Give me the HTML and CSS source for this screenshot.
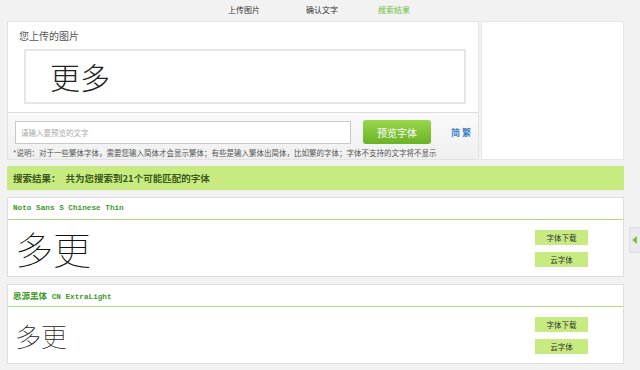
FILE: index.html
```html
<!DOCTYPE html>
<html lang="zh-CN">
<head>
<meta charset="UTF-8">
<title>搜索结果</title>
<link rel="stylesheet" href="styles.css">
</head>
<body>
<div class="steps">
    <span class="step">上传图片</span>
    <span class="step">确认文字</span>
    <span class="step active">搜索结果</span>
</div>
<div class="wrap">
    <div class="upload-row">
        <div class="upload">
            <div class="upload-top">
                <div class="upload-title">您上传的图片</div>
                <div class="pic">更多</div>
            </div>
            <div class="upload-bottom">
                <div class="input-row">
                    <input type="text" class="text-input" placeholder="请输入要预览的文字">
                    <button class="preview-btn">预览字体</button>
                    <span class="switch">简 繁</span>
                </div>
                <div class="note">*说明：对于一些繁体字体，需要您输入简体才会显示繁体；有些是输入繁体出简体，比如繁的字体；字体不支持的文字将不显示</div>
            </div>
        </div>
        <div class="side"></div>
    </div>

    <div class="result-bar">搜索结果：<span class="count">共为您搜索到21个可能匹配的字体</span></div>

    <div class="card">
        <div class="card-head">Noto Sans S Chinese Thin</div>
        <div class="card-body">
            <div class="sample big">多更</div>
            <div class="actions">
                <a class="act">字体下载</a>
                <a class="act">云字体</a>
            </div>
        </div>
    </div>

    <div class="card">
        <div class="card-head"><span class="cn">思源黑体</span> CN ExtraLight</div>
        <div class="card-body">
            <div class="sample small">多更</div>
            <div class="actions">
                <a class="act">字体下载</a>
                <a class="act">云字体</a>
            </div>
        </div>
    </div>
</div>
<div class="side-tab"><span class="arrow"></span></div>
</body>
</html>
```

FILE: styles.css
```css
body {
    margin: 0;
    background: #f2f2f2;
    font-family: "Noto Sans CJK SC", "Noto Sans", sans-serif;
    color: #333;
}
.steps {
    display: flex;
    height: 19px;
    align-items: center;
    padding-left: 228px;
    font-size: 8px;
    color: #333;
}
.step {
    width: 78px;
}
.step:nth-child(2) {
    width: 72px;
}
.step.active {
    color: #72c040;
}
.wrap {
    margin-left: 7px;
    width: 617px;
}
.upload-row {
    display: flex;
    gap: 2px;
    height: 139px;
    margin-top: 2px;
}
.upload {
    width: 472px;
    border: 1px solid #e2e2e2;
    box-sizing: border-box;
    display: flex;
    flex-direction: column;
}
.upload-top {
    background: #fff;
    height: 90px;
    border-bottom: 1px solid #dcdcdc;
}
.upload-title {
    font-size: 10px;
    color: #555;
    padding: 6px 0 0 11px;
    height: 21px;
}
.pic {
    margin-left: 16px;
    width: 442px;
    height: 55px;
    box-sizing: border-box;
    border: 2px solid #e6e6e6;
    font-size: 30px;
    font-weight: 300;
    line-height: 50px;
    padding-left: 24px;
    color: #222;
}
.upload-bottom {
    flex: 1;
    background: linear-gradient(#fafafa, #efefef);
    padding: 7px 0 0 5px;
}
.input-row {
    display: flex;
    align-items: center;
}
.text-input {
    width: 336px;
    height: 23px;
    box-sizing: border-box;
    border: 1px solid #c8c8c8;
    background: #fff;
    font-family: inherit;
    font-size: 7.5px;
    padding: 0 5px;
    margin-left: 2px;
}
.text-input::placeholder {
    color: #aaa;
}
.preview-btn {
    margin-left: 12px;
    width: 68px;
    height: 24px;
    border: none;
    border-radius: 3px;
    background: linear-gradient(#98d64a, #6cb226);
    color: #fff;
    font-family: inherit;
    font-size: 10px;
    padding: 0;
}
.switch {
    margin-left: 20px;
    font-size: 9px;
    font-weight: bold;
    color: #3a82c8;
}
.note {
    font-size: 7.5px;
    color: #555;
    margin-top: 3px;
    white-space: nowrap;
}
.side {
    flex: 1;
    background: #fff;
    border: 1px solid #e6e6e6;
}
.result-bar {
    margin-top: 6px;
    height: 24px;
    background: #c7eb80;
    font-size: 9.5px;
    font-weight: bold;
    color: #3c5a1c;
    line-height: 24px;
    padding-left: 6px;
}
.count {
    margin-left: 5px;
}
.card {
    margin-top: 7px;
    background: #fff;
    border: 1px solid #dedede;
}
.card-head {
    height: 21px;
    line-height: 21px;
    border-bottom: 1px solid #b2d98a;
    padding-left: 5px;
    font-family: "Liberation Mono", monospace;
    font-size: 7.7px;
    font-weight: bold;
    color: #3e9a2a;
}
.card-head .cn {
    font-family: "Noto Sans CJK SC", sans-serif;
    font-size: 8.5px;
}
.card-body {
    display: flex;
    height: 56px;
    align-items: center;
    justify-content: space-between;
}
.sample {
    padding-left: 7px;
    color: #111;
    font-weight: 100;
}
.sample.big {
    font-size: 38px;
    line-height: 44px;
}
.sample.small {
    font-size: 26px;
    color: #222;
}
.actions {
    display: flex;
    flex-direction: column;
    gap: 7px;
    margin-right: 35px;
}
.act {
    width: 53px;
    height: 15px;
    line-height: 15px;
    background: #c7eb80;
    text-align: center;
    font-size: 7.5px;
    color: #333;
}
.side-tab {
    position: absolute;
    left: 629px;
    top: 227px;
    width: 12px;
    height: 26px;
    background: #e9eaf0;
    border: 1px solid #dcdce2;
    border-radius: 2px;
    box-sizing: border-box;
}
.arrow {
    position: absolute;
    left: 2px;
    top: 8px;
    border-right: 5px solid #7cc23c;
    border-top: 4px solid transparent;
    border-bottom: 4px solid transparent;
}
```
